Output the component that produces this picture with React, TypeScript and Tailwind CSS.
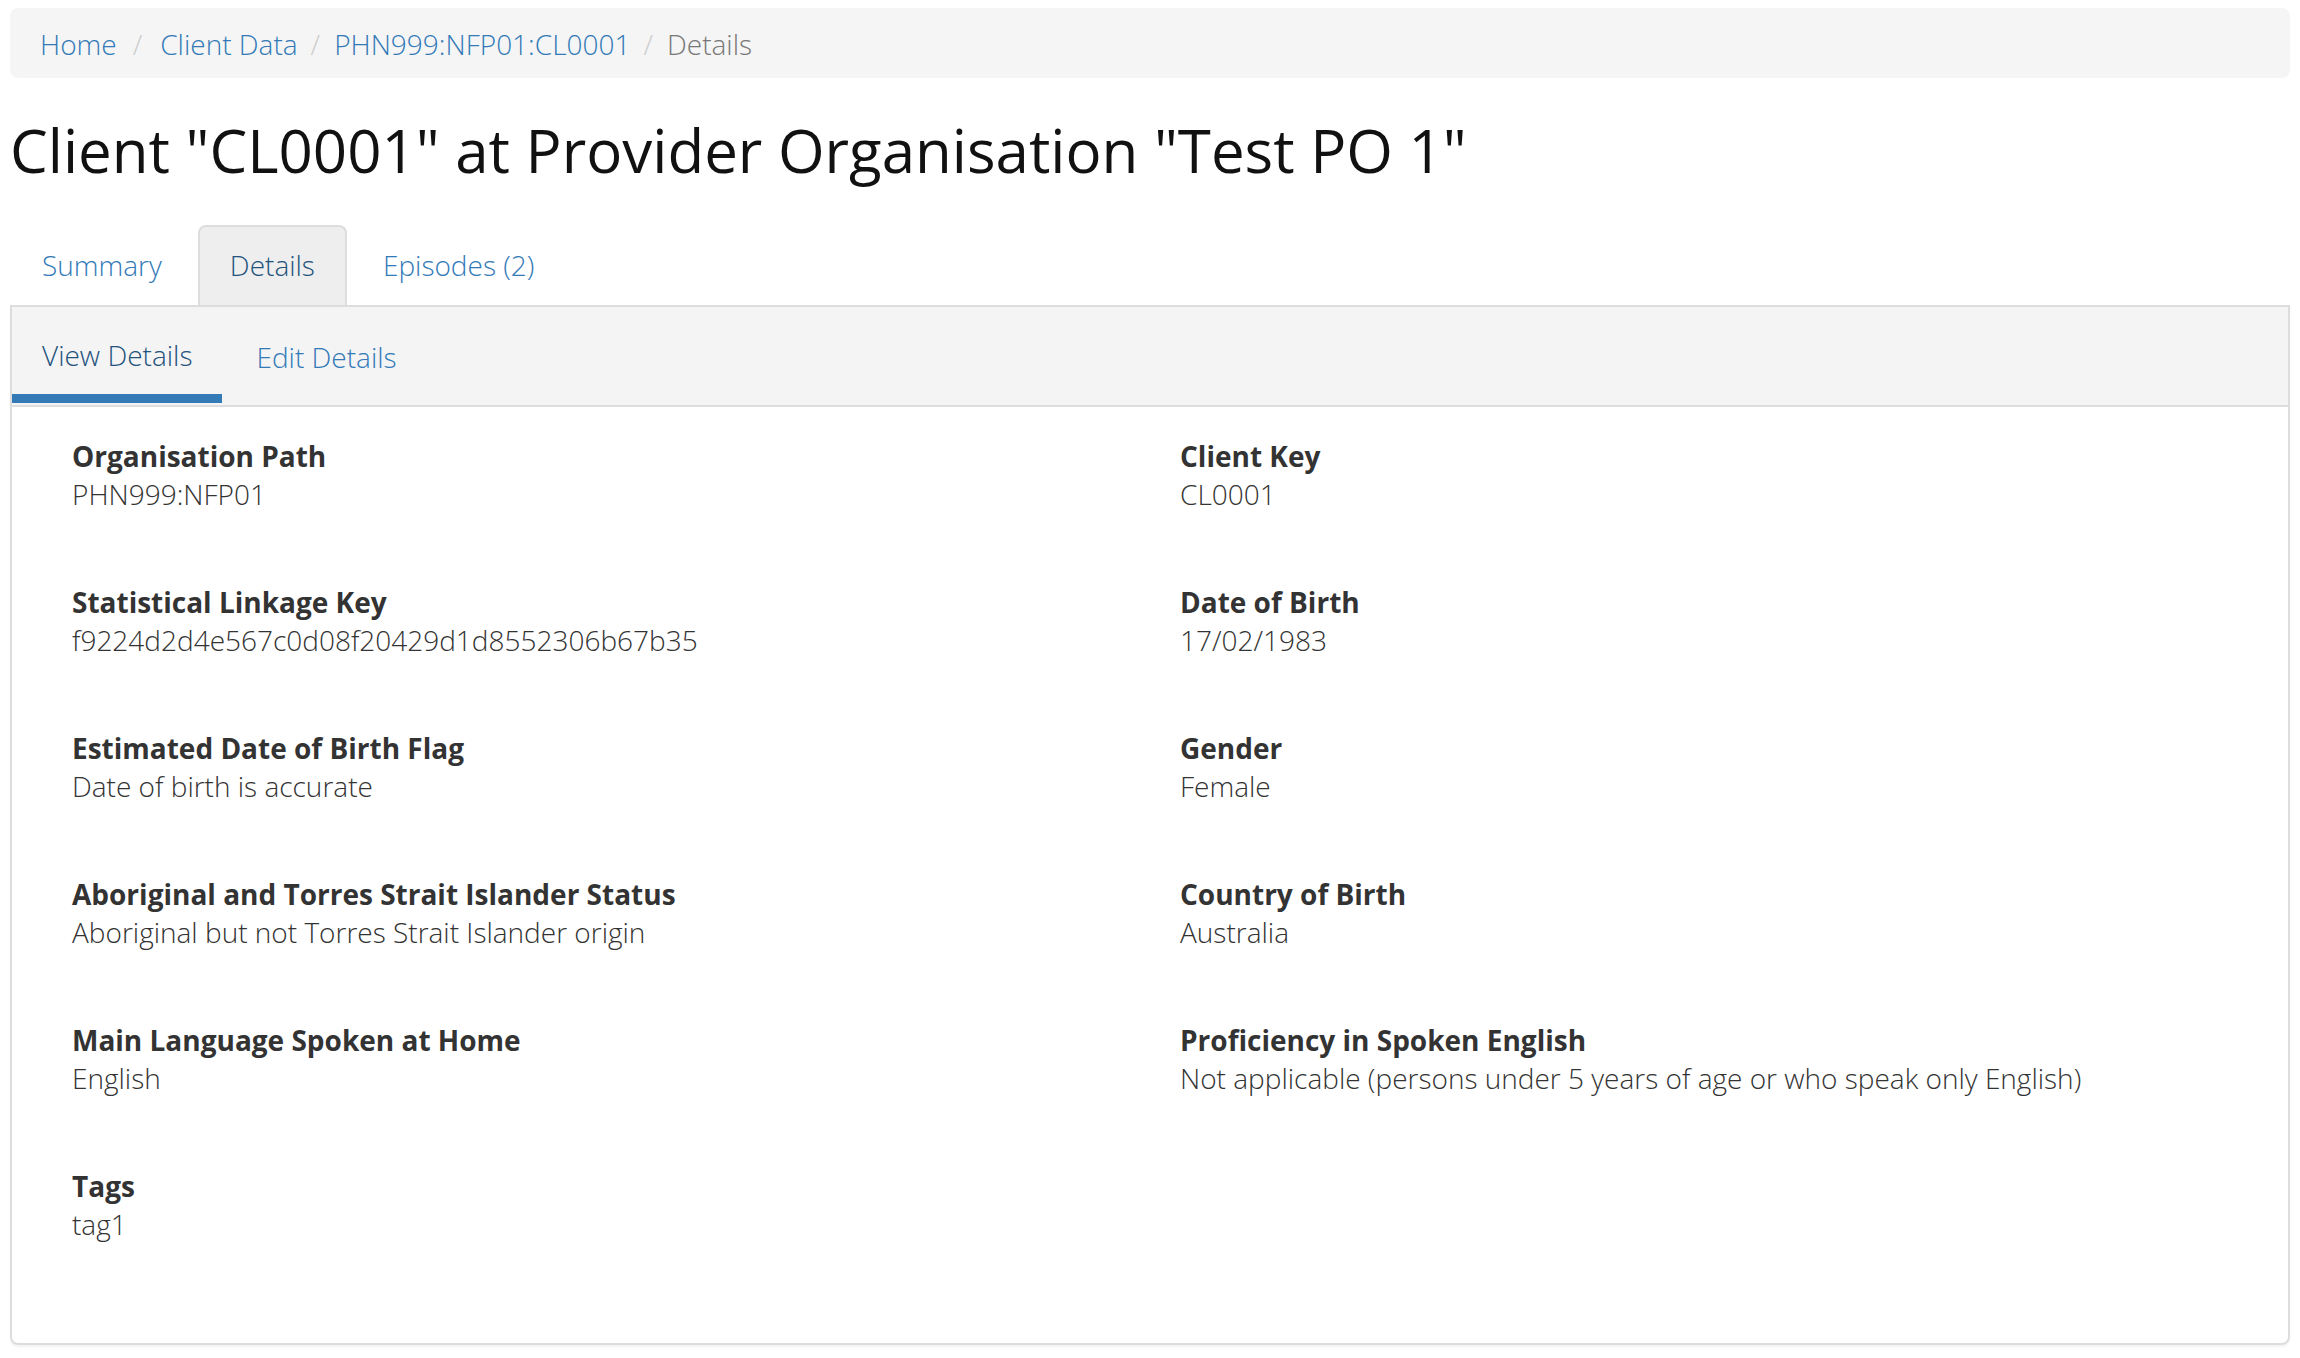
const crumbs = ['Home', 'Client Data', 'PHN999:NFP01:CL0001']

const fields: [string, string][] = [
  ['Organisation Path', 'PHN999:NFP01'],
  ['Client Key', 'CL0001'],
  ['Statistical Linkage Key', 'f9224d2d4e567c0d08f20429d1d8552306b67b35'],
  ['Date of Birth', '17/02/1983'],
  ['Estimated Date of Birth Flag', 'Date of birth is accurate'],
  ['Gender', 'Female'],
  ['Aboriginal and Torres Strait Islander Status', 'Aboriginal but not Torres Strait Islander origin'],
  ['Country of Birth', 'Australia'],
  ['Main Language Spoken at Home', 'English'],
  ['Proficiency in Spoken English', 'Not applicable (persons under 5 years of age or who speak only English)'],
  ['Tags', 'tag1'],
]

function Breadcrumb() {
  return (
    <div className="flex items-center h-[70px] px-[30px] pt-[1px] bg-[#f5f5f5] rounded-[8px] text-[28px] leading-[40px] font-light">
      {crumbs.map((c, i) => (
        <span key={c} className="flex items-center">
          <a className="text-[#337ab7]">{c}</a>
          <span className={i === 0 ? 'ml-[16px] mr-[18px] text-[#ccc]' : 'ml-[13px] mr-[14px] text-[#ccc]'}>/</span>
        </span>
      ))}
      <span className="text-[#777]">Details</span>
    </div>
  )
}

function Tabs() {
  return (
    <div className="flex gap-[4px] mt-[42px] text-[28px] leading-[40px] font-light">
      <a className="px-[32px] pt-[20px] pb-[20px] text-[#337ab7]">Summary</a>
      <a className="px-[30px] pt-[18px] pb-[20px] bg-[#eee] border-2 border-b-0 border-[#ddd] rounded-t-[8px] text-[#23527c]">
        Details
      </a>
      <a className="px-[32px] pt-[20px] pb-[20px] text-[#337ab7]">Episodes (2)</a>
    </div>
  )
}

function SubNav() {
  return (
    <div className="flex gap-[4px] bg-[#f4f4f4] border-b-2 border-[#ddd] text-[28px] leading-[40px] font-light">
      <div className="flex flex-col">
        <a className="px-[30px] pt-[28px] pb-[19px] text-[#23527c]">View Details</a>
        <div className="h-[9px] bg-[#337ab7] mb-[2px]" />
      </div>
      <div className="flex flex-col">
        <a className="px-[30px] pt-[30px] pb-[17px] text-[#337ab7]">Edit Details</a>
        <div className="h-[9px] mb-[2px]" />
      </div>
    </div>
  )
}

export default function App() {
  return (
    <div
      className="min-h-screen bg-white px-[10px] pt-[8px] text-[#333]"
      style={{ fontFamily: '"Open Sans", "Noto Sans", sans-serif' }}
    >
      <Breadcrumb />
      <h1 className="mt-[39px] text-[60px] leading-[66px] font-normal text-[#111]">
        Client "CL0001" at Provider Organisation "Test PO 1"
      </h1>
      <Tabs />
      <div className="border-2 border-[#ddd] rounded-b-[8px] shadow-[0_2px_2px_rgba(0,0,0,0.05)]">
        <SubNav />
        <div className="grid grid-cols-2 gap-x-[60px] px-[60px] pt-[30px] pb-[30px] text-[28px] leading-[38px]">
          {fields.map(([label, value]) => (
            <div key={label} className="mb-[70px]">
              <div className="font-bold">{label}</div>
              <div className="font-light">{value}</div>
            </div>
          ))}
        </div>
      </div>
    </div>
  )
}
